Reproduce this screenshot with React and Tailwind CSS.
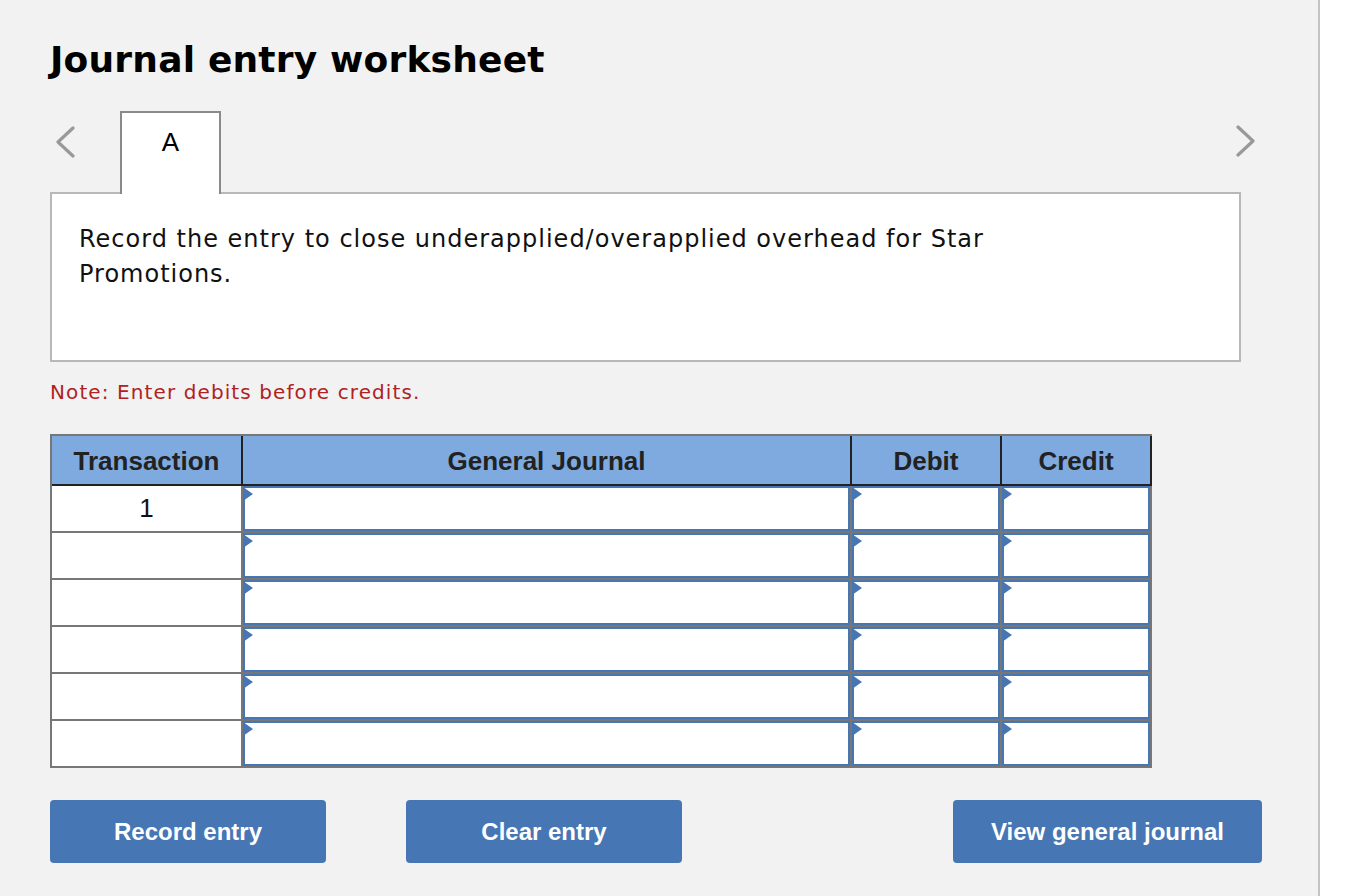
import React from 'react'

const Marker = () => (
  <svg className="absolute -left-[2px] -top-[1px]" width="10" height="14" viewBox="0 0 10 14">
    <polygon points="0,0 10,7 0,14" fill="#4676b4" />
  </svg>
)

const InputCell = () => (
  <div className="relative h-[45px] bg-white border-2 border-[#4676b4]">
    <Marker />
  </div>
)

const Chevron = ({ dir }) => (
  <svg width="22" height="32" viewBox="0 0 22 32">
    {dir === 'left' ? (
      <polyline points="18,2 3,16 18,30" fill="none" stroke="#999" strokeWidth="3.2" strokeLinecap="round" strokeLinejoin="round" />
    ) : (
      <polyline points="4,2 19,16 4,30" fill="none" stroke="#999" strokeWidth="3.2" strokeLinecap="round" strokeLinejoin="round" />
    )}
  </svg>
)

const rows = ['1', '', '', '', '', '']

export default function App() {
  return (
    <div className="flex min-h-screen bg-white">
      <div className="w-[1320px] shrink-0 bg-[#f2f2f2] border-r-2 border-[#c4c4c4] pl-[50px] pt-[38px] pb-[40px]">
        <h1 className="text-[36px] leading-[44px] font-bold tracking-[0.2px] text-black" style={{ fontFamily: '"DejaVu Sans", Verdana, sans-serif' }}>
          Journal entry worksheet
        </h1>

        {/* tabs */}
        <div className="mt-[29px] flex items-end w-[1206px]">
          <div className="w-[70px] h-[81px] flex items-start pt-[15px] pl-[5px]">
            <Chevron dir="left" />
          </div>
          <div className="relative z-10 -mb-[2px] w-[101px] h-[83px] bg-white border-2 border-b-0 border-[#8a8a8a] flex justify-center pt-[14px]">
            <span className="text-[26px] leading-[30px] text-black" style={{ fontFamily: '"Liberation Sans", Arial, sans-serif' }}>A</span>
          </div>
          <div className="flex-1" />
          <div className="h-[81px] flex items-start pt-[14px]">
            <Chevron dir="right" />
          </div>
        </div>

        <div className="w-[1191px] h-[170px] bg-white border-2 border-[#b8b8b8] pl-[27px] pt-[28px]">
          <p className="text-[24px] leading-[35px] tracking-[1px] text-[#111]" style={{ fontFamily: '"DejaVu Sans", Verdana, sans-serif' }}>
            Record the entry to close underapplied/overapplied overhead for Star
            <br />
            Promotions.
          </p>
        </div>

        <p className="mt-[17px] text-[20px] leading-[27px] tracking-[1.1px] text-[#b0221f]" style={{ fontFamily: '"DejaVu Sans", Verdana, sans-serif' }}>
          Note: Enter debits before credits.
        </p>

        {/* journal table */}
        <div className="mt-[28px] w-[1102px] bg-[#777] pt-[2px] pl-[2px] pb-[2px]" style={{ fontFamily: '"Liberation Sans", Arial, sans-serif' }}>
          <div className="grid grid-cols-[189px_607px_148px_148px] gap-x-[2px] bg-[#222] pr-[2px] pb-[2px]">
            {['Transaction', 'General Journal', 'Debit', 'Credit'].map((h) => (
              <div key={h} className="h-[48px] bg-[#7eaadf] flex items-center justify-center pt-[2px] text-[26px] font-bold text-[#222]">
                {h}
              </div>
            ))}
          </div>
          <div className="grid grid-cols-[189px_607px_148px_148px] gap-[2px] pr-[2px]">
            {rows.map((r, i) => (
              <React.Fragment key={i}>
                <div className="h-[45px] bg-white flex items-center justify-center text-[26px] text-[#111]">{r}</div>
                <InputCell />
                <InputCell />
                <InputCell />
              </React.Fragment>
            ))}
          </div>
        </div>

        {/* actions */}
        <div className="mt-[32px] flex w-[1212px]" style={{ fontFamily: '"Liberation Sans", Arial, sans-serif' }}>
          <button className="w-[276px] h-[63px] rounded-[4px] bg-[#4676b4] text-white text-[24px] font-bold">Record entry</button>
          <button className="ml-[80px] w-[276px] h-[63px] rounded-[4px] bg-[#4676b4] text-white text-[24px] font-bold">Clear entry</button>
          <div className="flex-1" />
          <button className="w-[309px] h-[63px] rounded-[4px] bg-[#4676b4] text-white text-[24px] font-bold">View general journal</button>
        </div>
      </div>
      <div className="flex-1 bg-white" />
    </div>
  )
}
